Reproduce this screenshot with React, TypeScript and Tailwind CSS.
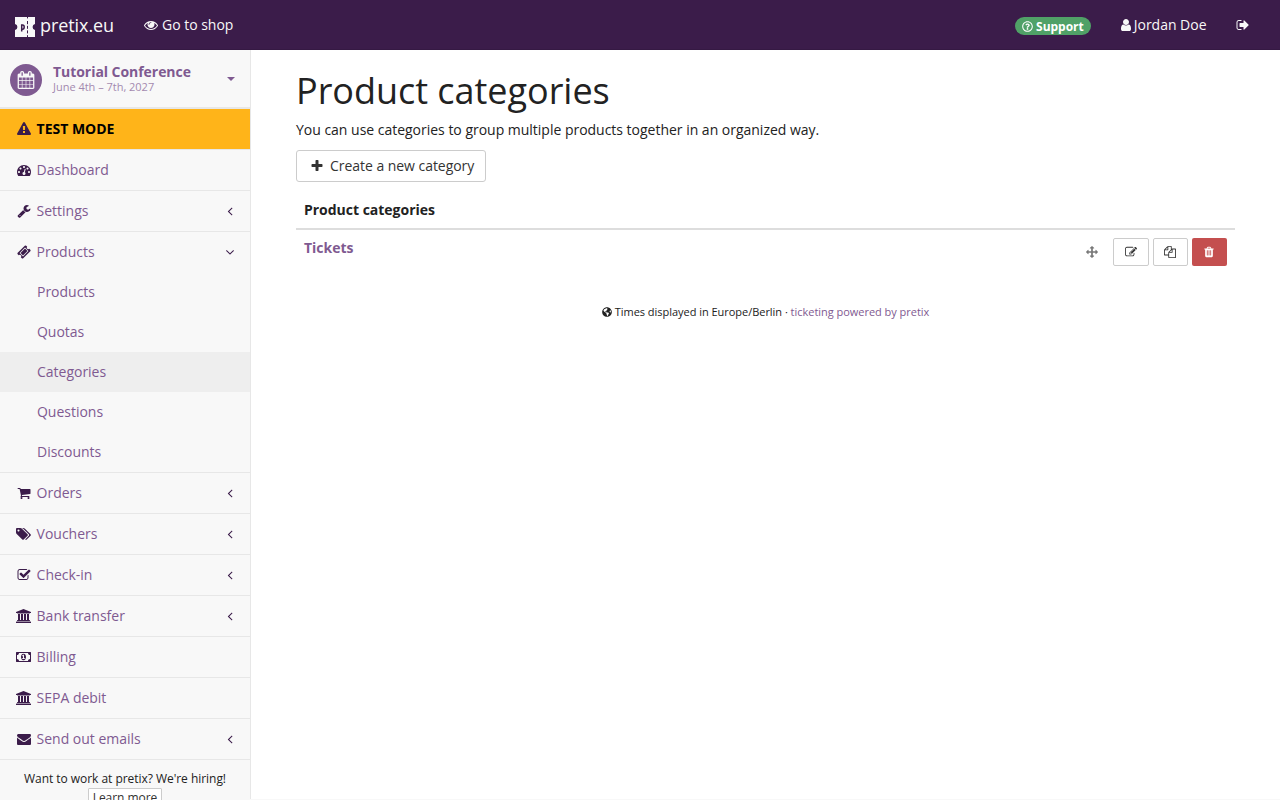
import React from "react";
import { FaRegQuestionCircle, FaGlobeAmericas } from "react-icons/fa";

const paths = {
  eye: "M1664 960q-152-236-381-353 61 104 61 225 0 185-131.5 316.5t-316.5 131.5-316.5-131.5-131.5-316.5q0-121 61-225-229 117-381 353 133 205 333.5 326.5t434.5 121.5 434.5-121.5 333.5-326.5zm-720-384q0-20-14-34t-34-14q-125 0-214.5 89.5t-89.5 214.5q0 20 14 34t34 14 34-14 14-34q0-86 61-147t147-61q20 0 34-14t14-34zm848 384q0 34-20 69-140 230-376.5 368.5t-499.5 138.5-499.5-139-376.5-368q-20-35-20-69t20-69q140-229 376.5-368t499.5-139 499.5 139 376.5 368q20 35 20 69z",
  plus: "M1600 736v192q0 40-28 68t-68 28h-416v416q0 40-28 68t-68 28h-192q-40 0-68-28t-28-68v-416h-416q-40 0-68-28t-28-68v-192q0-40 28-68t68-28h416v-416q0-40 28-68t68-28h192q40 0 68 28t28 68v416h416q40 0 68 28t28 68z",
  user: "M1536 1399q0 109-62.5 187t-150.5 78h-854q-88 0-150.5-78t-62.5-187q0-85 8.5-160.5t31.5-152 58.5-131 94-89 134.5-34.5q131 128 313 128t313-128q76 0 134.5 34.5t94 89 58.5 131 31.5 152 8.5 160.5zm-256-887q0 159-112.5 271.5t-271.5 112.5-271.5-112.5-112.5-271.5 112.5-271.5 271.5-112.5 271.5 112.5 112.5 271.5z",
  signOut: "M704 1440q0 4 1 20t.5 26.5-3 23.5-10 19.5-20.5 6.5h-320q-119 0-203.5-84.5t-84.5-203.5v-704q0-119 84.5-203.5t203.5-84.5h320q13 0 22.5 9.5t9.5 22.5q0 4 1 20t.5 26.5-3 23.5-10 19.5-20.5 6.5h-320q-66 0-113 47t-47 113v704q0 66 47 113t113 47h312l11.5 1 11.5 3 8 5.5 7 9 2 13.5zm928-544q0 26-19 45l-544 544q-19 19-45 19t-45-19-19-45v-288h-448q-26 0-45-19t-19-45v-384q0-26 19-45t45-19h448v-288q0-26 19-45t45-19 45 19l544 544q19 19 19 45z",
  calendar: "M192 1664h288v-288h-288v288zm352 0h320v-288h-320v288zm-352-352h288v-320h-288v320zm352 0h320v-320h-320v320zm-352-384h288v-288h-288v288zm736 736h320v-288h-320v288zm-384-736h320v-288h-320v288zm768 736h288v-288h-288v288zm-384-352h320v-320h-320v320zm-352-864v-288q0-13-9.5-22.5t-22.5-9.5h-64q-13 0-22.5 9.5t-9.5 22.5v288q0 13 9.5 22.5t22.5 9.5h64q13 0 22.5-9.5t9.5-22.5zm736 864h288v-320h-288v320zm-384-384h320v-288h-320v288zm384 0h288v-288h-288v288zm32-480v-288q0-13-9.5-22.5t-22.5-9.5h-64q-13 0-22.5 9.5t-9.5 22.5v288q0 13 9.5 22.5t22.5 9.5h64q13 0 22.5-9.5t9.5-22.5zm384-64v1280q0 52-38 90t-90 38h-1408q-52 0-90-38t-38-90v-1280q0-52 38-90t90-38h128v-96q0-66 47-113t113-47h64q66 0 113 47t47 113v96h384v-96q0-66 47-113t113-47h64q66 0 113 47t47 113v96h128q52 0 90 38t38 90z",
  warning: "M1024 1375v-190q0-14-9.5-23.5t-22.5-9.5h-192q-13 0-22.5 9.5t-9.5 23.5v190q0 14 9.5 23.5t22.5 9.5h192q13 0 22.5-9.5t9.5-23.5zm-2-374l18-459q0-12-10-19-13-11-24-11h-220q-11 0-24 11-10 7-10 21l17 457q0 10 10 16.5t24 6.5h185q14 0 23.5-6.5t10.5-16.5zm-14-934l768 1408q35 63-2 126-17 29-46.5 46t-63.5 17h-1536q-34 0-63.5-17t-46.5-46q-37-63-2-126l768-1408q17-31 47-49t65-18 65 18 47 49z",
  dashboard: "M384 1152q0-53-37.5-90.5t-90.5-37.5-90.5 37.5-37.5 90.5 37.5 90.5 90.5 37.5 90.5-37.5 37.5-90.5zm192-448q0-53-37.5-90.5t-90.5-37.5-90.5 37.5-37.5 90.5 37.5 90.5 90.5 37.5 90.5-37.5 37.5-90.5zm428 481l101-382q6-26-7.5-48.5t-38.5-29.5-48 6.5-30 39.5l-101 382q-60 5-107 43.5t-63 98.5q-20 77 20 146t117 89 146-20 89-117q16-60-6-117t-72-91zm660-33q0-53-37.5-90.5t-90.5-37.5-90.5 37.5-37.5 90.5 37.5 90.5 90.5 37.5 90.5-37.5 37.5-90.5zm-640-640q0-53-37.5-90.5t-90.5-37.5-90.5 37.5-37.5 90.5 37.5 90.5 90.5 37.5 90.5-37.5 37.5-90.5zm448 192q0-53-37.5-90.5t-90.5-37.5-90.5 37.5-37.5 90.5 37.5 90.5 90.5 37.5 90.5-37.5 37.5-90.5zm320 448q0 261-141 483-19 29-54 29h-1402q-35 0-54-29-141-221-141-483 0-182 71-348t191-286 286-191 348-71 348 71 286 191 191 286 71 348z",
  wrench: "M448 1472q0-26-19-45t-45-19-45 19-19 45 19 45 45 19 45-19 19-45zm644-420l-682 682q-37 37-90 37-52 0-91-37l-106-108q-38-36-38-90 0-53 38-91l681-681q39 98 114.5 173.5t173.5 114.5zm634-435q0 39-23 106-47 134-164.5 217.5t-258.5 83.5q-185 0-316.5-131.5t-131.5-316.5 131.5-316.5 316.5-131.5q58 0 121.5 16.5t107.5 46.5q16 11 16 28t-16 28l-293 169v224l193 107q5-3 79-48.5t135.5-81 70.5-35.5q15 0 23.5 10t8.5 25z",
  ticket: "M1024 452l316 316-572 572-316-316zm-211 979l618-618q19-19 19-45t-19-45l-362-362q-18-18-45-18t-45 18l-618 618q-19 19-19 45t19 45l362 362q18 18 45 18t45-18zm889-637l-907 908q-37 37-90.5 37t-90.5-37l-126-126q56-56 56-136t-56-136-136-56-136 56l-125-126q-37-37-37-90.5t37-90.5l907-906q37-37 90.5-37t90.5 37l125 125q-56 56-56 136t56 136 136 56 136-56l126 125q37 37 37 90.5t-37 90.5z",
  cart: "M704 1536q0 52-38 90t-90 38-90-38-38-90 38-90 90-38 90 38 38 90zm896 0q0 52-38 90t-90 38-90-38-38-90 38-90 90-38 90 38 38 90zm128-1088v512q0 24-16.5 42.5t-40.5 21.5l-1044 122q13 60 13 70 0 16-24 64h920q26 0 45 19t19 45-19 45-45 19h-1024q-26 0-45-19t-19-45q0-11 8-31.5t16-36 21.5-40 15.5-29.5l-177-823h-204q-26 0-45-19t-19-45 19-45 45-19h256q16 0 28.5 6.5t19.5 15.5 13 24.5 8 26 5.5 29.5 4.5 26h1201q26 0 45 19t19 45z",
  tags: "M448 448q0-53-37.5-90.5t-90.5-37.5-90.5 37.5-37.5 90.5 37.5 90.5 90.5 37.5 90.5-37.5 37.5-90.5zm1067 576q0 53-37 90l-491 492q-39 37-91 37-53 0-90-37l-715-716q-38-37-64.5-101t-26.5-117v-416q0-52 38-90t90-38h416q53 0 117 26.5t102 64.5l715 714q37 39 37 91zm384 0q0 53-37 90l-491 492q-39 37-91 37-36 0-59-14t-53-45l470-470q37-37 37-90 0-52-37-91l-715-714q-38-38-102-64.5t-117-26.5h224q53 0 117 26.5t102 64.5l715 714q37 39 37 91z",
  check: "M1472 930v318q0 119-84.5 203.5t-203.5 84.5h-832q-119 0-203.5-84.5t-84.5-203.5v-832q0-119 84.5-203.5t203.5-84.5h832q63 0 117 25 15 7 18 23 3 17-9 29l-49 49q-10 10-23 10-3 0-9-2-23-6-45-6h-832q-66 0-113 47t-47 113v832q0 66 47 113t113 47h832q66 0 113-47t47-113v-254q0-13 9-22l64-64q10-10 23-10 6 0 12 3 20 8 20 29zm231-489l-814 814q-24 24-57 24t-57-24l-430-430q-24-24-24-57t24-57l110-110q24-24 57-24t57 24l263 263 647-647q24-24 57-24t57 24l110 110q24 24 24 57t-24 57z",
  bank: "M960 0l960 384v128h-128q0 26-20.5 45t-48.5 19h-1526q-28 0-48.5-19t-20.5-45h-128v-128zm-704 640h256v768h128v-768h256v768h128v-768h256v768h128v-768h256v768h59q28 0 48.5 19t20.5 45v64h-1664v-64q0-26 20.5-45t48.5-19h59v-768zm1595 960q28 0 48.5 19t20.5 45v128h-1920v-128q0-26 20.5-45t48.5-19h1782z",
  money: "M768 1152h384v-96h-128v-448h-114l-148 137 77 80q42-37 55-57h2v288h-128v96zm512-256q0 70-21 142t-59.5 134-101.5 101-138 39-138-39-101.5-101-59.5-134-21-142 21-142 59.5-134 101.5-101 138-39 138 39 101.5 101 59.5 134 21 142zm512 256v-512q-106 0-181-75t-75-181h-1152q0 106-75 181t-181 75v512q106 0 181 75t75 181h1152q0-106 75-181t181-75zm128-832v1152q0 26-19 45t-45 19h-1792q-26 0-45-19t-19-45v-1152q0-26 19-45t45-19h1792q26 0 45 19t19 45z",
  envelope: "M1792 710v794q0 66-47 113t-113 47h-1472q-66 0-113-47t-47-113v-794q44 49 101 87 362 246 497 345 57 42 92.5 65.5t94.5 48 110 24.5h2q51 0 110-24.5t94.5-48 92.5-65.5q170-123 498-345 57-39 100-87zm0-294q0 79-49 151t-122 123q-376 261-468 325-10 7-42.5 31t-54 38.5-52 32.5-57.5 27-50 9h-2q-23 0-50-9t-57.5-27-52-32.5-54-38.5-42.5-31q-91-64-262-182.5t-205-142.5q-62-42-117-115.5t-55-136.5q0-78 41.5-130t118.5-52h1472q65 0 112.5 47t47.5 113z",
  angleLeft: "M1203 544q0 13-10 23l-393 393 393 393q10 10 10 23t-10 23l-50 50q-10 10-23 10t-23-10l-466-466q-10-10-10-23t10-23l466-466q10-10 23-10t23 10l50 50q10 10 10 23z",
  angleDown: "M1395 736q0 13-10 23l-466 466q-10 10-23 10t-23-10l-466-466q-10-10-10-23t10-23l50-50q10-10 23-10t23 10l393 393 393-393q10-10 23-10t23 10l50 50q10 10 10 23z",
  arrows: "M1792 896q0 26-19 45l-256 256q-19 19-45 19t-45-19-19-45v-128h-384v384h128q26 0 45 19t19 45-19 45l-256 256q-19 19-45 19t-45-19l-256-256q-19-19-19-45t19-45 45-19h128v-384h-384v128q0 26-19 45t-45 19-45-19l-256-256q-19-19-19-45t19-45l256-256q19-19 45-19t45 19 19 45v128h384v-384h-128q-26 0-45-19t-19-45 19-45l256-256q19-19 45-19t45 19l256 256q19 19 19 45t-19 45-45 19h-128v384h384v-128q0-26 19-45t45-19 45 19l256 256q19 19 19 45z",
  edit: "M888 1184l116-116-152-152-116 116v56h96v96h56zm440-720q-16-16-33 1l-350 350q-17 17-1 33t33-1l350-350q17-17 1-33zm80 594v190q0 119-84.5 203.5t-203.5 84.5h-832q-119 0-203.5-84.5t-84.5-203.5v-832q0-119 84.5-203.5t203.5-84.5h832q63 0 117 25 15 7 18 23 3 17-9 29l-49 49q-14 14-32 8-23-6-45-6h-832q-66 0-113 47t-47 113v832q0 66 47 113t113 47h832q66 0 113-47t47-113v-126q0-13 9-22l64-64q15-15 35-7t20 29zm-96-738l288 288-672 672h-288v-288zm444 132l-92 92-288-288 92-92q28-28 68-28t68 28l152 152q28 28 28 68t-28 68z",
  copy: "M1696 384q40 0 68 28t28 68v1216q0 40-28 68t-68 28h-960q-40 0-68-28t-28-68v-288h-544q-40 0-68-28t-28-68v-672q0-40 20-88t48-76l408-408q28-28 76-48t88-20h416q40 0 68 28t28 68v328q68-40 128-40h416zm-544 213l-299 299h299v-299zm-640-384l-299 299h299v-299zm196 647l316-316v-416h-384v416q0 40-28 68t-68 28h-416v640h512v-256q0-40 20-88t48-76zm956 804v-1152h-384v416q0 40-28 68t-68 28h-416v640h896z",
  trash: "M704 1376v-704q0-14-9-23t-23-9h-64q-14 0-23 9t-9 23v704q0 14 9 23t23 9h64q14 0 23-9t9-23zm256 0v-704q0-14-9-23t-23-9h-64q-14 0-23 9t-9 23v704q0 14 9 23t23 9h64q14 0 23-9t9-23zm256 0v-704q0-14-9-23t-23-9h-64q-14 0-23 9t-9 23v704q0 14 9 23t23 9h64q14 0 23-9t9-23zm-544-992h448l-48-117q-7-9-17-11h-317q-10 2-17 11zm928 32v64q0 14-9 23t-23 9h-96v948q0 83-47 143.5t-113 60.5h-832q-66 0-113-58.5t-47-141.5v-952h-96q-14 0-23-9t-9-23v-64q0-14 9-23t23-9h309l70-167q15-37 54-63t79-26h320q40 0 79 26t54 63l70 167h309q14 0 23 9t9 23z",
};

type IconName = keyof typeof paths;

function Icon({ name, className = "h-3.5 w-3.5", wide = false }: { name: IconName; className?: string; wide?: boolean }) {
  return (
    <svg viewBox={wide ? "0 0 1920 1792" : "0 0 1792 1792"} className={`shrink-0 ${className}`} fill="currentColor" aria-hidden="true">
      <path d={paths[name]} />
    </svg>
  );
}

function Logo() {
  return (
    <svg viewBox="0 0 20 20" className="mt-px h-5 w-5 shrink-0" aria-hidden="true">
      <path d="M0 0h20v6.9a3.2 3.2 0 0 0 0 6.2V20H0v-6.9a3.2 3.2 0 0 0 0-6.2z" fill="#f8f8f8" />
      <path d="M12.5 0v1.4M12.5 4v3.2M12.5 8.8v3M12.5 13.4v3M12.5 18.2v1.8" stroke="#3b1c4a" strokeWidth="1" />
      <path d="M6.7 14.6V7.2M6.7 8h.9q1.6 0 1.6 2.1t-1.6 2.1h-.9" fill="none" stroke="#3b1c4a" strokeWidth="1.5" />
    </svg>
  );
}

type Item = { label: string; icon: IconName; wide?: boolean; expandable?: boolean; children?: string[] };

const items: Item[] = [
  { label: "Dashboard", icon: "dashboard" },
  { label: "Settings", icon: "wrench", expandable: true },
  { label: "Products", icon: "ticket", expandable: true, children: ["Products", "Quotas", "Categories", "Questions", "Discounts"] },
  { label: "Orders", icon: "cart", expandable: true },
  { label: "Vouchers", icon: "tags", wide: true, expandable: true },
  { label: "Check-in", icon: "check", expandable: true },
  { label: "Bank transfer", icon: "bank", wide: true, expandable: true },
  { label: "Billing", icon: "money", wide: true },
  { label: "SEPA debit", icon: "bank", wide: true },
  { label: "Send out emails", icon: "envelope", expandable: true },
];

function NavItem({ item }: { item: Item }) {
  return (
    <li className="border-b border-[#e7e7e7]">
      <a className="flex h-10 items-center pl-[15px] pr-[13px] text-[#7f5a91]">
        <span className={`mr-[3.6px] flex w-[18px] text-[#3b1c4a] ${item.wide ? "pl-px" : "justify-center"}`}>
          <Icon name={item.icon} wide={item.wide} className={item.wide ? "h-3.5 w-[15px]" : "h-3.5 w-3.5"} />
        </span>
        <span className="grow">{item.label}</span>
        {item.expandable && (
          <span className="text-[#3b1c4a]">
            <Icon name={item.children ? "angleDown" : "angleLeft"} />
          </span>
        )}
      </a>
      {item.children && (
        <ul>
          {item.children.map((c) => (
            <li key={c} className={`flex h-10 items-center pl-[37px] text-[#7f5a91] ${c === "Categories" ? "bg-[#eeeeee]" : ""}`}>
              {c}
            </li>
          ))}
        </ul>
      )}
    </li>
  );
}

export default function App() {
  return (
    <div className="flex h-[800px] flex-col overflow-hidden bg-[#f8f8f8] font-['Open_Sans',sans-serif] text-sm leading-5 tracking-[-0.015px] text-[#222222]">
      <header className="flex h-[50px] shrink-0 items-center border-b border-[#351943] bg-[#3b1c4a] px-[15px] text-[#f8f8f8]">
        <div className="flex items-center gap-[5px] pt-[3px] text-lg leading-5 tracking-[-0.08px]">
          <Logo />
          <span className="-mt-[2px]">pretix.eu</span>
        </div>
        <a className="ml-[30px] flex items-center gap-1 pt-px">
          <Icon name="eye" />
          Go to shop
        </a>
        <div className="ml-auto flex items-center">
          <span className="mt-[3px] flex h-[18px] items-center gap-[3px] rounded-full bg-[#50a167] px-[7px] text-xs font-bold text-white">
            <FaRegQuestionCircle className="h-[11px] w-[11px]" />
            <span className="pt-px">Support</span>
          </span>
          <span className="ml-[30px] flex items-center gap-[3px] pt-px">
            <svg viewBox="256 0 1280 1792" className="h-3.5 w-[10px]" fill="currentColor" aria-hidden="true">
              <path d={paths.user} />
            </svg>
            Jordan Doe
          </span>
          <Icon name="signOut" className="ml-[29.5px] mr-[15px] mt-px h-3.5 w-3.5" />
        </div>
      </header>

      <div className="flex min-h-0 grow">
        <aside className="mb-px w-[251px] shrink-0 border-r border-[#e7e7e7] bg-[#f8f8f8]">
          <div className="flex h-[59px] items-center border-b-2 border-[#e7e7e7] pl-[10px] pr-[15px]">
            <span className="mt-[2px] flex h-8 w-8 items-center justify-center rounded-full bg-[#7f5a91] text-[#f8f8f8]">
              <Icon name="calendar" className="h-[18px] w-[18px]" />
            </span>
            <span className="-mt-px mb-px ml-[11px] flex grow flex-col text-[#7f5a91]">
              <strong className="leading-[18px] tracking-[-0.05px]">Tutorial Conference</strong>
              <span className="text-[11px] leading-3 opacity-70">June 4th – 7th, 2027</span>
            </span>
            <svg viewBox="0 0 8 4" className="h-1 w-2 text-[#7f5a91]" fill="currentColor" aria-hidden="true">
              <path d="M0 0h8L4 4z" />
            </svg>
          </div>
          <div className="flex h-[41px] items-center border-b border-[#e7e7e7] bg-[#ffb419] pl-[15px] font-bold text-black">
            <span className="mr-[3.6px] flex w-[18px] justify-center text-[#3b1c4a]">
              <Icon name="warning" />
            </span>
            TEST MODE
          </div>
          <ul>
            {items.map((item) => (
              <NavItem key={item.label} item={item} />
            ))}
          </ul>
          <div className="flex flex-col items-center pt-[10px] text-xs leading-[18px]">
            <span className="tracking-[-0.04px]">Want to work at pretix? We're hiring!</span>
            <a className="rounded-[1px] border border-[#cccccc] bg-white px-1 tracking-[-0.04px] text-[#333333]">Learn more</a>
          </div>
        </aside>

        <main className="mb-px min-w-0 grow bg-white px-[45px] pt-[19px]">
          <h1 className="text-[36px] leading-[44px] tracking-[-0.03px]">Product categories</h1>
          <p className="mt-[7px]">You can use categories to group multiple products together in an organized way.</p>
          <a className="mt-[10px] inline-flex h-8 items-center rounded-[3px] border border-[#cccccc] px-[11px] text-[#333333]">
            <span className="mr-[4px] flex w-[18px] justify-center">
              <Icon name="plus" />
            </span>
            <span className="tracking-[-0.04px]">Create a new category</span>
          </a>
          <table className="mt-[10px] w-full">
            <thead>
              <tr className="border-b-2 border-[#dddddd]">
                <th colSpan={2} className="px-2 py-2 text-left font-bold">Product categories</th>
              </tr>
            </thead>
            <tbody>
              <tr>
                <td className="px-2 py-2 align-top">
                  <strong className="text-[#7f5a91]">Tickets</strong>
                </td>
                <td className="px-2 py-2">
                  <div className="flex items-center justify-end gap-1">
                    <span className="mr-[11px] text-[#777777]"><Icon name="arrows" className="h-3 w-3" /></span>
                    <a className="flex h-7 w-9 items-center justify-center rounded-[2px] border border-[#cccccc] text-[#333333]"><Icon name="edit" className="h-3 w-3" /></a>
                    <a className="flex h-7 w-[35px] items-center rounded-[2px] border border-[#cccccc] pl-[10px] text-[#333333]"><Icon name="copy" className="h-3 w-3" /></a>
                    <a className="flex h-7 w-[35px] items-center rounded-[2px] bg-[#c44f4f] pl-[11px] text-white"><Icon name="trash" className="h-3 w-3" /></a>
                  </div>
                </td>
              </tr>
            </tbody>
          </table>
          <footer className="mt-[28px] flex items-center justify-center text-[11px] leading-5 tracking-[-0.03px]">
            <FaGlobeAmericas className="mr-[3px] h-2.5 w-2.5" />
            <span>
              Times displayed in Europe/Berlin · <a className="text-[#7f5a91]">ticketing powered by pretix</a>
            </span>
          </footer>
        </main>
      </div>
    </div>
  );
}
